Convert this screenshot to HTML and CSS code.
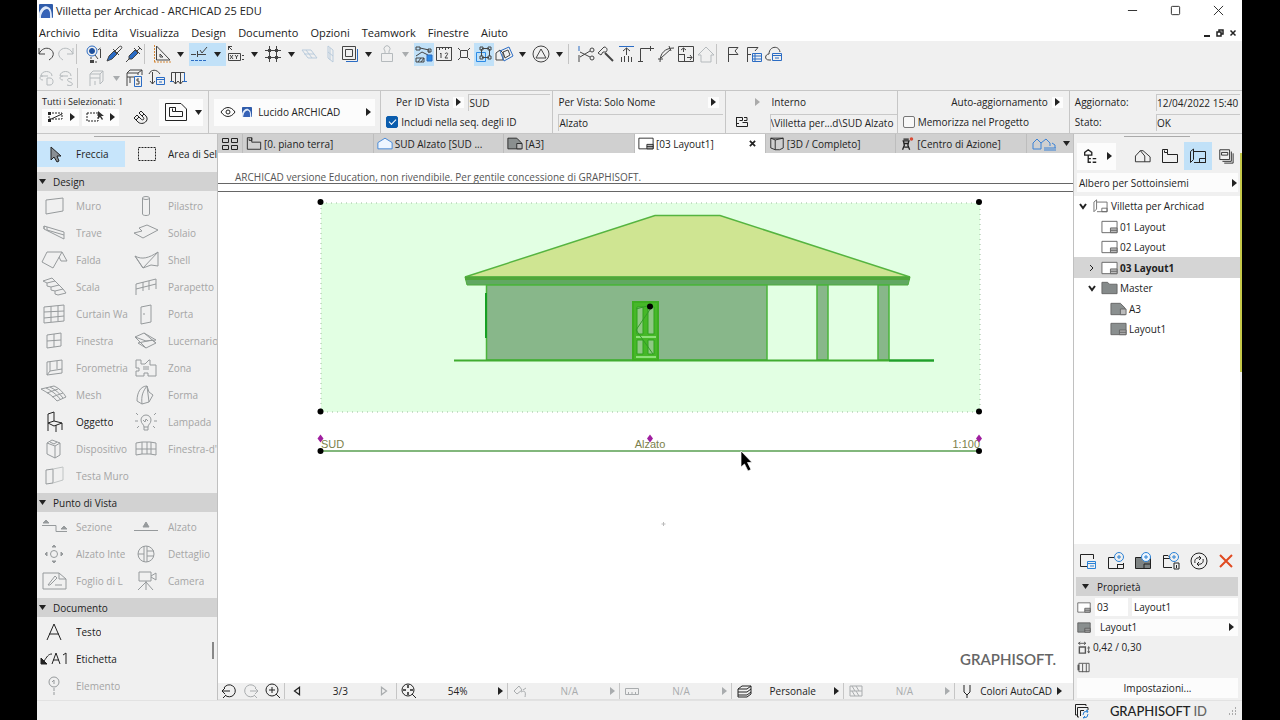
FILE: index.html
```html
<!DOCTYPE html>
<html lang="it">
<head>
<meta charset="utf-8">
<title>Villetta per Archicad - ARCHICAD 25 EDU</title>
<link rel="stylesheet" href="styles.css">
</head>
<body>
<svg class="defs" aria-hidden="true">
  <symbol id="app-logo" viewBox="0 0 14 14"><rect width="14" height="14" rx="1" fill="#2f5cab" stroke="none"/><path d="M0 14V9C2 4 6 1 9 3c3 1 4 5 4 11h-2C11 8 10 5 8 5 5 5 2 9 2 14Z" fill="#dfe9fa" stroke="none"/><path d="M2 14c1-5 3-8 6-8s3 3 3 8Z" fill="#3763b8" stroke="none"/></symbol>
  <symbol id="sheet" viewBox="0 0 18 14"><path d="M1 1h16v12H1Z" fill="#fff"/><path d="M10 8h7v5h-7Z" fill="#bbb"/><path d="M10 10.500h7"/></symbol>
  <symbol id="sheet-dark" viewBox="0 0 18 14"><path d="M1 1h16v12H1Z" fill="#8a8f8f"/><path d="M10 8h7v5h-7Z" fill="#aaa"/><path d="M10 10.500h7"/></symbol>
  <symbol id="sheet-cut" viewBox="0 0 18 14"><path d="M1 1h10l5 5v7H1Z" fill="#8a8f8f"/><path d="M11 7h6v6h-6Z" fill="#bbb"/></symbol>
  <symbol id="plan" viewBox="0 0 18 16"><path d="M1.500 1.500h5v3h-3v-2M6.500 1.500v5h10v8h-15v-13"/></symbol>
  <symbol id="book" viewBox="0 0 18 16"><path d="M5 3.500h11.500v11H5M4.500 1v10.500l-3 3v-11ZM10.500 10.500h6v4h-6Z"/></symbol>
  <symbol id="tri-right" viewBox="0 0 5 8"><path d="M0 0l5 4-5 4Z" fill="currentColor" stroke="none"/></symbol>
  <symbol id="tri-down" viewBox="0 0 7 5"><path d="M0 0h7L3.500 5Z" fill="currentColor" stroke="none"/></symbol>
</svg>

<div class="app">
  <header class="titlebar">
    <svg class="logo"><use href="#app-logo"/></svg>
    <h1>Villetta per Archicad - ARCHICAD 25 EDU</h1>
    <div class="window-controls">
      <button aria-label="Riduci"><svg viewBox="0 0 12 12"><path d="M1 6h10"/></svg></button>
      <button aria-label="Ingrandisci"><svg viewBox="0 0 12 12"><rect x="1.500" y="1.500" width="9" height="9" rx="1"/></svg></button>
      <button aria-label="Chiudi"><svg viewBox="0 0 12 12"><path d="M1 1l10 10M11 1L1 11"/></svg></button>
    </div>
  </header>

  <nav class="menubar">
    <button>Archivio</button><button>Edita</button><button>Visualizza</button><button>Design</button><button>Documento</button><button>Opzioni</button><button>Teamwork</button><button>Finestre</button><button>Aiuto</button>
    <div class="doc-controls">
      <button aria-label="Riduci documento"><svg viewBox="0 0 8 8"><path d="M1 7h6"/></svg></button>
      <button aria-label="Ripristina documento"><svg viewBox="0 0 8 8"><path d="M1 3h4v4H1ZM3 3V1h4v4H5" stroke-width="1.500"/></svg></button>
      <button aria-label="Chiudi documento"><svg viewBox="0 0 8 8"><path d="M1.500 1.500l5 5M6.500 1.500l-5 5" stroke-width="1.500"/></svg></button>
    </div>
  </nav>

  <div class="toolbars">
    <div class="toolbar">
      <button class="tb first" aria-label="Annulla"><svg viewBox="0 0 20 20"><path d="M2 4v6h6M2 10C4 5 9 3 13 5c5 3 4 8-1 11"/></svg></button>
      <button class="tb dim" aria-label="Ripeti"><svg viewBox="0 0 20 20"><path d="M17 4v6h-6M17 10C15 5 10 3 6 5c-5 3-4 8 1 11"/></svg></button>
      <span class="sep"></span>
      <button class="tb" aria-label="Trova e seleziona"><svg viewBox="0 0 20 20"><circle cx="8" cy="7" r="5" stroke="#2b6cc4"/><circle cx="8" cy="7" r="2.500" fill="#1d4f9c" stroke="#1d4f9c"/><path d="M11 11l3 4M16.500 5v9M14 6l2.500-2"/><path d="M7 13v5h7" stroke-dasharray="2 1"/><path d="M6 16h4v3H6Z" fill="currentColor" stroke="none"/></svg></button>
      <button class="tb" aria-label="Preleva parametri"><svg viewBox="0 0 20 20"><path d="M3 17l2-5 5-5 3 3-5 5Z" fill="#2b6cc4"/><path d="M9 5l6 6M11 7l4-4c2-2 4 0 2 2l-4 4"/></svg></button>
      <button class="tb" aria-label="Inietta parametri"><svg viewBox="0 0 20 20"><path d="M2 18l4-4M5 12l6-6 3 3-6 6H5Z" fill="#2b6cc4"/><path d="M10 4l6 6M13 7l3-3M14 2l4 4"/></svg></button>
      <span class="sep"></span>
      <button class="tb" aria-label="Righello"><svg viewBox="0 0 20 20"><path d="M2.500 1v17M2 18h17" stroke="#d58a3a" stroke-dasharray="2 1"/><path d="M4.500 2v14H18ZM8 10v3h3Z"/></svg></button><button class="arrow" aria-label="Opzioni righello"><svg><use href="#tri-down"/></svg></button>
      <button class="tb on" aria-label="Linee guida"><svg viewBox="0 0 20 20"><path d="M2 10.500h5M8.500 7v6M8 10.500h9"/><path d="M11 6l2 3 5-6"/><path d="M2 16.500h15" stroke="#2b6cc4" stroke-dasharray="3 1"/></svg></button><button class="arrow on" aria-label="Opzioni linee guida"><svg><use href="#tri-down"/></svg></button>
      <button class="tb" aria-label="Tracker"><svg viewBox="0 0 20 20"><path d="M2.500 6V2.500H6M2 2l4 4M2.500 9.500h12v7h-12ZM4 11l3 4M7 11l-3 4M9 11l1.500 2L12 11M10.500 13v2M16 11.500h2M16 15.500h2"/></svg></button><button class="arrow" aria-label="Opzioni tracker"><svg><use href="#tri-down"/></svg></button>
      <button class="tb" aria-label="Griglia"><svg viewBox="0 0 20 20"><path d="M6.500 2v16M13.500 2v16M2 6.500h16M2 13.500h16"/><path d="M5 6.500h3M12 6.500h3M5 13.500h3M12 13.500h3" stroke-width="3"/></svg></button><button class="arrow" aria-label="Opzioni griglia"><svg><use href="#tri-down"/></svg></button>
      <button class="tb faint" aria-label="Piano orizzontale"><svg viewBox="0 0 20 20"><path d="M2 6h9l6 8H8ZM6 6l6 8M4 10h10"/></svg></button>
      <button class="tb faint" aria-label="Piano verticale"><svg viewBox="0 0 20 20"><path d="M8 2l5 4v12l-5-4ZM8 8l5 4M10 4v12"/></svg></button>
      <button class="tb" aria-label="Gruppi"><svg viewBox="0 0 20 20"><path d="M6 17.500h11.500V5" stroke="#2b6cc4"/><path d="M2.500 2.500h13v13h-13ZM5.500 5.500h7v7h-7Z"/></svg></button><button class="arrow" aria-label="Opzioni gruppi"><svg><use href="#tri-down"/></svg></button>
      <button class="tb dim" aria-label="Gravità"><svg viewBox="0 0 20 20"><path d="M4.500 9.500h11v8h-11ZM8 9V7a3 3 0 1 1 4 0v2"/></svg></button><button class="arrow dim" aria-label="Opzioni gravità"><svg><use href="#tri-down"/></svg></button>
      <button class="tb on" aria-label="Traccia"><svg viewBox="0 0 20 20"><path d="M2 3h4v3H2ZM6 4l9 2v3M2 12l6-4 6 3M14 5h3v3h-3Z"/><path d="M13 11h5v6h-5Z" fill="#2b8ae6" stroke="#2b6cc4"/><path d="M2 14h8v4H2ZM4 18l3-4M7 18l3-4"/></svg></button>
      <button class="tb" aria-label="Misura"><svg viewBox="0 0 20 20"><path d="M2 3.500h16M2.500 3v13.500h15V3M5.500 3v3M8.500 3v2M11.500 3v3M14.500 3v2M6 10l1-1v5M11 10c1-2 4-1 2 1l-2 3h3"/></svg></button>
      <button class="tb" aria-label="Punti"><svg viewBox="0 0 20 20"><path d="M6.500 6.500h7v7h-7ZM6 6L4 4M14 6l2-2M6 14l-2 2M14 14l2 2"/></svg></button>
      <button class="tb on" aria-label="Gruppo"><svg viewBox="0 0 20 20"><path d="M2.500 8.500h9v9h-9Z" stroke="#2b8ae6"/><path d="M8 4.500h7M8 13.500h7M7.500 5v7M15.500 5v7M6 3h3v3H6ZM14 3h3v3h-3ZM14 12h3v3h-3ZM6 12h3v3H6Z"/></svg></button>
      <button class="tb" aria-label="Piano 3D"><svg viewBox="0 0 20 20"><path d="M2 16V9l4-3 3 3v7Z"/><path d="M6 7l9-4 4 9-9 5Z" stroke="#2b6cc4"/><path d="M9 8l5-2 2 5-5 3Z"/></svg></button><button class="arrow" aria-label="Opzioni piano"><svg><use href="#tri-down"/></svg></button>
      <button class="tb" aria-label="Triangolo"><svg viewBox="0 0 20 20"><circle cx="10" cy="10" r="8"/><path d="M10 5l5 9H5Z"/></svg></button><button class="arrow" aria-label="Altre opzioni"><svg><use href="#tri-down"/></svg></button>
      <span class="sep"></span>
      <button class="tb" aria-label="Taglia"><svg viewBox="0 0 20 20"><path d="M3 2v5" stroke="#2b6cc4"/><path d="M3 11v7M4 8l10 5M4 13l10-6"/><circle cx="16" cy="6" r="2"/><circle cx="16" cy="14" r="2"/></svg></button>
      <button class="tb" aria-label="Accetta"><svg viewBox="0 0 20 20"><path d="M2 9l6-6c3 0 4 3 2 5l-3 0-2 3Z"/><path d="M9 9l8 8" stroke-width="2"/></svg></button>
      <button class="tb" aria-label="Regola"><svg viewBox="0 0 20 20"><path d="M3 2.500h15" stroke="#2b6cc4"/><path d="M10.500 11V4M7 7l3.500-3L14 7M5.500 13v5M8.500 12v6M12.500 12v6M15.500 13v5"/></svg></button>
      <button class="tb" aria-label="Intersezione"><svg viewBox="0 0 20 20"><path d="M4.500 18V4.500H18M2 17.500h5M14.500 2v5"/></svg></button>
      <button class="tb" aria-label="Raccordo"><svg viewBox="0 0 20 20"><path d="M4 18C4 9 9 4 18 4M2 15h5M13 2l2 5M5 14L15 5"/></svg></button>
      <button class="tb" aria-label="Ridimensiona"><svg viewBox="0 0 20 20"><path d="M2.500 2.500h15v15h-15ZM8.500 10v7M2 10.500h7M7.500 8V4M5 6l2.500-2L10 6M11 13.500h5M14 11l2 2.500-2 2.500"/></svg></button>
      <button class="tb dim" aria-label="Casa"><svg viewBox="0 0 20 20"><path d="M2 11l8-8 8 8h-3v7H5v-7Z"/></svg></button>
      <span class="sep"></span>
      <button class="tb" aria-label="Bandiera"><svg viewBox="0 0 20 20"><path d="M4.500 18V3.500H14l-3 3.500 3 3.500H4"/></svg></button>
      <button class="tb" aria-label="Elenco questioni"><svg viewBox="0 0 20 20"><path d="M3.500 18V3.500H14L11 7M3 10.500h4"/><path d="M8.500 9.500h9v8h-9ZM8 12h9M8 15h9M11 9v9" stroke="#2b6cc4"/></svg></button>
      <button class="tb" aria-label="Nuvola"><svg viewBox="0 0 20 20"><path d="M7 16H5c-5 0-4-6 0-6 0-8 10-9 11-2"/><path d="M8.500 9.500h9v7h-9ZM8 11.500h9M11 14h4" stroke="#2b6cc4"/></svg></button>
    </div>
    <div class="toolbar second">
      <button class="tb first dim" aria-label="Carica"><svg viewBox="0 0 20 20"><path d="M4 8c0-6 11-6 11 0M3 8h8M6 12c-4 0-4-4 0-4M10 10h3c4 0 4 7 0 7h-3Z"/></svg></button>
      <button class="tb dim" aria-label="Salva"><svg viewBox="0 0 20 20"><path d="M3 8c0-6 11-6 11 0M3 8h8M6 12c-4 0-4-4 0-4M15 11c-5-2-6 2-2 3s3 5-3 3"/></svg></button>
      <span class="sep"></span>
      <button class="tb dim wide" aria-label="Mobile"><svg viewBox="0 0 20 20"><path d="M3 6l3-3h10v10l-3 3V6H3v12M3 10h10M13 6l3-3M8 13v4"/></svg></button><button class="arrow dim" aria-label="Opzioni mobile"><svg><use href="#tri-down"/></svg></button>
      <button class="tb wide" aria-label="Parametri oggetto"><svg viewBox="0 0 20 20"><path d="M1 5l3-3h12v5M1 5v13M1 5h11l4-3M1 9h7M4 9v6M12 5v2"/><path d="M8.500 8.500h7v10h-7Z" stroke="#2b6cc4"/><path d="M13 11h-2v2h2v3h-3"/></svg></button>
      <button class="tb wide" aria-label="Trasferisci"><svg viewBox="0 0 20 20"><path d="M1 6c2-5 8-5 11 0M4.500 4v12M2 13l2.500 3L7 13"/><path d="M8.500 9.500h8v7h-8ZM8 11.500h8M11 14h3" stroke="#2b6cc4"/></svg></button>
      <button class="tb wide" aria-label="Distribuisci"><svg viewBox="0 0 20 20"><path d="M1.500 13V4.500h13V13M5.500 4v12M10.500 4v12M3 13l2.500 3L8 13l2.500 3 2.500-3"/><path d="M0 13.500h3M13 13.500h4M14.500 5v8" stroke="#2b6cc4"/></svg></button>
    </div>
  </div>

  <section class="infobar" aria-label="Casella informazioni">
    <div class="info selection">
      <div class="sel-left">
        <span class="small">Tutti i Selezionati: 1</span>
        <div class="sel-buttons">
          <button class="white" aria-label="Selezione"><svg viewBox="0 0 18 12" class="i18"><path d="M3 2h13v6H3Z" stroke-dasharray="2 1"/><path d="M3 9l13-6"/><path d="M2 1h3v3H2ZM2 8h3v3H2Z" fill="currentColor" stroke="none"/></svg><svg class="tri"><use href="#tri-right"/></svg></button>
          <button class="white" aria-label="Area"><svg viewBox="0 0 18 12" class="i18"><path d="M1 2h11v8H1Z" stroke-dasharray="2 1"/><path d="M12 0v8l2-2 2 3 1-1-2-3h3Z" fill="#333" stroke="none"/></svg><svg class="tri"><use href="#tri-right"/></svg></button>
          <button class="magnet" aria-label="Magnete"><svg viewBox="0 0 16 16" class="i16"><path d="M8 2l5 5c4 5-4 10-8 6L1 9l3-3 4 4c2 2 4 0 2-2L6 4ZM3 11l3-3M9 7l2-2" fill="#eee"/></svg></button>
        </div>
      </div>
      <button class="white layout-btn" aria-label="Disegno"><svg viewBox="0 0 24 20"><path d="M1.500 1.500H17L22.500 7v11.500h-21Z"/><path d="M5.500 5.500h6v4h-3v-3M11.500 5.500v4h7v5h-13v-9"/></svg></button><button class="white layout-arrow" aria-label="Opzioni disegno"><svg class="down"><use href="#tri-down"/></svg></button>
    </div>
    <div class="info">
      <button class="white layer"><svg viewBox="0 0 16 12" class="i16"><path d="M1 6c4-6 10-6 14 0-4 6-10 6-14 0Z"/><circle cx="8" cy="6" r="2"/></svg><svg class="mini"><use href="#app-logo"/></svg><span>Lucido ARCHICAD</span><svg class="tri"><use href="#tri-right"/></svg></button>
    </div>
    <div class="info rows">
      <div class="line"><span class="label-right">Per ID Vista</span><button class="white step" aria-label="Scegli ID"><svg class="tri"><use href="#tri-right"/></svg></button><input class="well id" aria-label="ID vista" value="SUD"></div>
      <label class="line"><input type="checkbox" class="check" checked>Includi nella seq. degli ID</label>
    </div>
    <div class="info rows">
      <div class="line"><span class="grow">Per Vista: Solo Nome</span><button class="white step" aria-label="Scegli nome"><svg class="tri"><use href="#tri-right"/></svg></button></div>
      <div class="line"><input class="well" aria-label="Nome" value="Alzato"></div>
    </div>
    <div class="info source">
      <svg class="tri faded"><use href="#tri-right"/></svg><input class="plain" aria-label="Origine" value="Interno">
      <svg viewBox="0 0 14 12" class="i14"><path d="M1.500 1.500h6v3h-3M1.500 1v9.500h11v-4h-5M1 7.500h3M9 1.500h3v3H9"/></svg><input class="well" aria-label="Percorso" value="\Villetta per...d\SUD Alzato">
    </div>
    <div class="info rows">
      <div class="line"><span class="label-right">Auto-aggiornamento</span><button class="white step" aria-label="Aggiornamento"><svg class="tri"><use href="#tri-right"/></svg></button></div>
      <label class="line"><input type="checkbox" class="check">Memorizza nel Progetto</label>
    </div>
    <div class="info rows">
      <div class="line"><label class="grow" for="upd">Aggiornato:</label><input id="upd" class="well date" value="12/04/2022 15:40"></div>
      <div class="line"><label class="grow" for="st">Stato:</label><input id="st" class="well date" value="OK"></div>
    </div>
  </section>

  <main class="workspace">
    <aside class="toolbox" aria-label="Strumenti">
      <span class="handle"></span>
      <div class="tools pick">
        <button class="tool active chosen"><svg viewBox="0 0 28 22"><path d="M11 4v13l3-3 3 5 2-1-2-5h4Z" fill="#8a8f94"/></svg><span>Freccia</span></button>
        <button class="tool active"><svg viewBox="0 0 28 22"><path d="M6.500 4.500h17v13h-17Z" stroke-dasharray="2 1"/></svg><span>Area di Sel</span></button>
      </div>
      <h2><svg class="down"><use href="#tri-down"/></svg>Design</h2>
      <div class="tools">
        <button class="tool"><svg viewBox="0 0 28 22"><path d="M6 5l17-2v13L6 19Z"/></svg><span>Muro</span></button>
        <button class="tool"><svg viewBox="0 0 28 22"><ellipse cx="14" cy="3" rx="3.500" ry="1.500"/><path d="M10.500 3v16c0 2 7 2 7 0V3"/></svg><span>Pilastro</span></button>
        <button class="tool"><svg viewBox="0 0 28 22"><path d="M4 4l20 6v7L4 7ZM4 4v3M7 5v3l17 5"/></svg><span>Trave</span></button>
        <button class="tool"><svg viewBox="0 0 28 22"><path d="M2 11l8-2-3-3 8-3 11 5-15 8Z"/></svg><span>Solaio</span></button>
        <button class="tool"><svg viewBox="0 0 28 22"><path d="M7 3h15l-9 16L2 13ZM22 3l5 9h-6l-2-4"/></svg><span>Falda</span></button>
        <button class="tool"><svg viewBox="0 0 28 22"><path d="M3 7c7 4 14 2 23-4v14l-7-1-8 3ZM11 19L26 3M3 7l8 12"/></svg><span>Shell</span></button>
        <button class="tool"><svg viewBox="0 0 28 22"><path d="M3 5l9-3 3 3-8 2ZM7 7v3l4 1 8-2-4-4M11 11v3l4 1 8-2-4-4M15 15v3l3 1 8-2-3-4"/></svg><span>Scala</span></button>
        <button class="tool"><svg viewBox="0 0 28 22"><path d="M4 8l20-5v10M4 8v11M4 13l20-5M11 6v9M17 5v9"/></svg><span>Parapetto</span></button>
        <button class="tool"><svg viewBox="0 0 28 22"><path d="M4 4l20-2v16L4 20ZM4 9l20-1M4 15l20-2M11 3v16M18 3v15"/></svg><span>Curtain Wa</span></button>
        <button class="tool"><svg viewBox="0 0 28 22"><path d="M9 4l10-2v17L9 21ZM11 11h2"/></svg><span>Porta</span></button>
        <button class="tool"><svg viewBox="0 0 28 22"><path d="M7 5l14-2v13L7 18ZM7 11l14-1M14 4v13"/></svg><span>Finestra</span></button>
        <button class="tool"><svg viewBox="0 0 28 22"><path d="M3 7l9-4 12 7-10 1ZM6 13l14-3 4 3-10 5ZM3 7l11 11M12 3l12 10"/></svg><span>Lucernario</span></button>
        <button class="tool"><svg viewBox="0 0 28 22"><path d="M7 5l15-2v13L7 18ZM10 5v9l12-2M10 14l-3 4M17 4v8"/></svg><span>Forometria</span></button>
        <button class="tool"><svg viewBox="0 0 28 22"><path d="M4 3h5v4h4l4-4h1v5h6v11h-8v-3h-4v3H4v-5h3v-3H4ZM11 10h6M11 12h6"/></svg><span>Zona</span></button>
        <button class="tool"><svg viewBox="0 0 28 22"><path d="M1 5l13-3c5 2 9 6 12 11l-9 4C13 12 8 9 1 5ZM6 4c6 3 10 6 15 12M10 3c6 3 9 6 13 11M7 9l11-4M12 13l11-4"/></svg><span>Mesh</span></button>
        <button class="tool"><svg viewBox="0 0 28 22"><path d="M5 17C5 8 9 2 15 2l2 6 4 3-4 7-7 2ZM15 2c-4 5-6 10-5 18M15 2l2 16"/></svg><span>Forma</span></button>
        <button class="tool active"><svg viewBox="0 0 28 22"><path d="M8 3l6-2v9M8 3v17M8 12l6-2 8 2-8 3-6-3M16 14v7M22 12v7"/></svg><span>Oggetto</span></button>
        <button class="tool"><svg viewBox="0 0 28 22"><path d="M12 16c0-3-3-3-3-7a5 5 0 0 1 10 0c0 4-3 4-3 7v3h-4v-3h4M11 9l2 2 1-3 2 2M6 4L4 2M22 4l2-2M6 10H3M22 10h3M7 15l-2 2M21 15l2 2"/></svg><span>Lampada</span></button>
        <button class="tool"><svg viewBox="0 0 28 22"><path d="M7 5l5-3 8 3v12l-5 3-8-4ZM7 5l8 3 5-3M15 8v12M10 4l4 2 3-2"/></svg><span>Dispositivo</span></button>
        <button class="tool"><svg viewBox="0 0 28 22"><path d="M4 5l6-1h8l6 1v12l-6-1h-8l-6 1ZM10 4v12M15 4v12M19 4v12M4 11h20"/></svg><span>Finestra-d'</span></button>
        <button class="tool"><svg viewBox="0 0 28 22"><path d="M6 5l7-1v14l-7 1Z"/><path d="M13 4l10-2v13l-10 3" stroke="#c0c4c4"/></svg><span>Testa Muro</span></button>
      </div>
      <h2><svg class="down"><use href="#tri-down"/></svg>Punto di Vista</h2>
      <div class="tools">
        <button class="tool"><svg viewBox="0 0 28 22"><path d="M2 9.500h14v6h11"/><path d="M3 7l3-3 3 3ZM21 13l3-3 3 3Z" fill="currentColor"/></svg><span>Sezione</span></button>
        <button class="tool"><svg viewBox="0 0 28 22"><path d="M2 14.500h24"/><path d="M11 11l3-5 3 5Z" fill="currentColor"/></svg><span>Alzato</span></button>
        <button class="tool"><svg viewBox="0 0 28 22"><circle cx="14" cy="11" r="3.500"/><path d="M12 4l2-2 2 2ZM12 18l2 2 2-2ZM7 9l-2 2 2 2ZM21 9l2 2-2 2Z" fill="currentColor"/></svg><span>Alzato Inte</span></button>
        <button class="tool"><svg viewBox="0 0 28 22"><circle cx="14" cy="11" r="8"/><path d="M12 3v16M15 3v16M15 8h7M15 13h7M6 11h6"/></svg><span>Dettaglio</span></button>
        <button class="tool"><svg viewBox="0 0 28 22"><path d="M3 3h16l7 6v10H3ZM19 3v6h7M8 15l7-9 2 2-7 7ZM15 15h7"/></svg><span>Foglio di L</span></button>
        <button class="tool"><svg viewBox="0 0 28 22"><path d="M7 2h12v9H7ZM19 6l5-3v7l-5-3M14 11v9M14 12l-8 8M14 12l7 8"/></svg><span>Camera</span></button>
      </div>
      <h2><svg class="down"><use href="#tri-down"/></svg>Documento</h2>
      <div class="tools single">
        <button class="tool active"><svg viewBox="0 0 28 22"><path d="M7 19l7-16 7 16M9 13h10"/></svg><span>Testo</span></button>
        <button class="tool active"><svg viewBox="0 0 28 22"><path d="M12 6C8 6 7 9 4 13"/><path d="M1 10v6h6Z" fill="currentColor"/><path d="M12 16l4-11 4 11M13 12h6M23 7l3-2v11"/></svg><span>Etichetta</span></button>
        <button class="tool"><svg viewBox="0 0 28 22"><circle cx="14" cy="7" r="5"/><path d="M12 7l2-2v4"/><path d="M14 13v7" stroke-dasharray="3 1"/></svg><span>Elemento</span></button>
        <i class="scroll-thumb"></i>
      </div>
    </aside>

    <section class="editor">
      <div class="tabs">
        <button class="tab-grid" aria-label="Panoramica schede"><svg viewBox="0 0 18 16"><path d="M1.500 2.500h6v4h-6ZM10.500 2.500h6v4h-6ZM1.500 9.500h6v4h-6ZM10.500 9.500h6v4h-6Z"/></svg></button>
        <button class="tab"><svg><use href="#plan"/></svg>[0. piano terra]</button>
        <button class="tab"><svg viewBox="0 0 18 16"><path d="M1 7l8-5 8 5v7H1Z" fill="#eef6ff" stroke="#3b82d6"/></svg>SUD Alzato [SUD ...</button>
        <button class="tab"><svg><use href="#sheet-cut"/></svg>[A3]</button>
        <button class="tab current"><svg><use href="#sheet"/></svg>[03 Layout1]<svg class="tab-close" viewBox="0 0 8 8"><path d="M1 1l6 6M7 1L1 7"/></svg></button>
        <button class="tab"><svg viewBox="0 0 18 16"><path d="M2 2l5 2v11l-5-2ZM7 4l9-2v11l-4 2H7M2 2h14"/></svg>[3D / Completo]</button>
        <button class="tab"><svg viewBox="0 0 18 16"><path d="M4 5h8M5 5l1 5-2 5M11 5l-1 5 2 5M6 8h4M6 12h5M5 3h6" stroke-width="1.500"/><circle cx="14" cy="3" r="2" fill="#d94a35" stroke="none"/></svg>[Centro di Azione]</button>
        <button class="tab-menu" aria-label="Elenco schede"><svg class="houses" viewBox="0 0 26 16"><path d="M1 13V7l4-4 4 4v6ZM9 7l5-4 4 4v3M12 12h12M12 14h12M20 7l3 2v3" stroke="#3b82d6"/></svg><svg class="down"><use href="#tri-down"/></svg></button>
      </div>
      <svg class="sheet" viewBox="218 153 855 530" role="img" aria-label="Layout con alzato sud">
        <text x="235" y="181" class="edu">ARCHICAD versione Education, non rivendibile. Per gentile concessione di GRAPHISOFT.</text>
        <path class="rule" d="M218 183.500H1073M218 191.500H1073"/>
        <rect x="321" y="203" width="659" height="209" class="frame"/>
        <path d="M465 277L655 215.500H720L910 277Z" fill="#cfe592" stroke="#55b440" stroke-width="1.500"/>
        <path d="M465 277H910L908 285H467Z" fill="#61a862" stroke="#4fac3d"/>
        <path d="M465 278.500H910" stroke="#50a63a" stroke-width="3"/>
        <path d="M486.500 285H767V360H486.500ZM817 285H828V360H817ZM878 285H889V360H878Z" fill="#88b78a" stroke="#4ab53b" stroke-width="1.500"/>
        <path d="M486 293V338" stroke="#16a023" stroke-width="2"/>
        <path d="M454 360.500H934" stroke="#40ac30" stroke-width="2"/>
        <path d="M889 360.500H934" stroke="#1fa02d" stroke-width="2"/>
        <rect x="633" y="302" width="25" height="58" fill="#46b828" stroke="#3cae20" stroke-width="2"/>
        <path d="M637 307H643V334H637ZM648 307H654V334H648ZM637 340H643V354H637ZM648 340H654V354H648Z" fill="#8fc884" stroke="#2fa31d"/>
        <path d="M636 337H656M636 357H656" stroke="#8de078" stroke-width="2"/>
        <path d="M651 308L636 330L653 354M636 309L651 305" stroke="#339a29"/>
        <g class="solid"><circle cx="650" cy="306.500" r="3"/><circle cx="320.500" cy="202" r="3"/><circle cx="979" cy="202" r="3"/><circle cx="320.500" cy="411.500" r="3"/><circle cx="979" cy="411.500" r="3"/></g>
        <path d="M321 451H979" stroke="#82b77c" stroke-width="2"/>
        <g class="caption"><text x="321" y="448">SUD</text><text x="650" y="448" text-anchor="middle">Alzato</text><text x="980" y="448" text-anchor="end">1:100</text></g>
        <path class="hotspots" d="M320.500 434.500l3 4-3 4-3-4ZM650 434.500l3 4-3 4-3-4ZM979 434.500l3 4-3 4-3-4Z"/>
        <g class="solid"><circle cx="320.500" cy="451" r="3"/><circle cx="979" cy="451" r="3"/></g>
        <path d="M741 451V467L744.500 464L748 471L751 469.500L747.500 462.500H752Z" fill="#000" stroke="#fff" stroke-width=".7"/>
        <path d="M661.500 524H665.500M663.500 522V526" stroke="#bbb"/>
        <text x="1056" y="665" text-anchor="end" class="brand">GRAPHISOFT.</text>
      </svg>
      <div class="quickbar">
        <div class="zooms">
          <button aria-label="Zoom precedente"><svg viewBox="0 0 16 16"><path d="M3 5a6 6 0 1 1 1 7M1 8h8M4 5L1 8l3 3M5 12l-3 3"/></svg></button>
          <button class="dim" aria-label="Zoom successivo"><svg viewBox="0 0 16 16"><path d="M13 5a6 6 0 1 0-1 7M15 8H7M12 5l3 3-3 3M11 12l3 3"/></svg></button>
          <button aria-label="Aumenta zoom"><svg viewBox="0 0 16 16"><circle cx="7" cy="7" r="6"/><path d="M11 11l4 4M4 7h6M7 4v6"/></svg></button>
        </div>
        <div class="q"><button aria-label="Precedente"><svg class="hollow" viewBox="0 0 6 8"><path d="M5 1v6L1 4Z"/></svg></button><span>3/3</span><button class="dim" aria-label="Successivo"><svg class="hollow" viewBox="0 0 6 8"><path d="M1 1v6l4-3Z"/></svg></button></div>
        <div class="q"><svg viewBox="0 0 16 16"><circle cx="7" cy="7" r="6"/><path d="M11 11l4 4"/><path d="M7 2v3M7 9v3M2 7h3M9 7h3" stroke-width="1.500"/></svg><span>54%</span><button aria-label="Scala zoom"><svg class="tri"><use href="#tri-right"/></svg></button></div>
        <div class="q dim"><svg viewBox="0 0 16 16"><path d="M2 8l5-5 3 4-5 4ZM9 9c4-2 5 0 4 5M11 7l3-2"/></svg><span>N/A</span><button aria-label="Orientamento"><svg class="tri"><use href="#tri-right"/></svg></button></div>
        <div class="q dim"><svg viewBox="0 0 16 16"><path d="M1.500 5.500h13v6h-13ZM4.500 9v2M8 9v2M11.500 9v2"/></svg><span>N/A</span><button aria-label="Scala"><svg class="tri"><use href="#tri-right"/></svg></button></div>
        <div class="q"><svg viewBox="0 0 16 16"><path d="M2 6l4-3h9l-4 3ZM2 6v3h9l4-3M2 9v3h9l4-3M2 12v2h9l4-3M15 3v8"/></svg><span>Personale</span><button aria-label="Combinazione lucidi"><svg class="tri"><use href="#tri-right"/></svg></button></div>
        <div class="q dim"><svg viewBox="0 0 16 16"><path d="M2 3h12v10H2ZM2 8h12M4 3l3 5M8 3l3 5M4 8l3 5M8 8l3 5"/></svg><span>N/A</span><button aria-label="Struttura"><svg class="tri"><use href="#tri-right"/></svg></button></div>
        <div class="q"><svg viewBox="0 0 16 16"><path d="M5 2v7l3 3 3-3V2M8 11v4"/></svg><span>Colori AutoCAD</span><button aria-label="Penne"><svg class="tri"><use href="#tri-right"/></svg></button></div>
      </div>
    </section>

    <aside class="navigator" aria-label="Navigatore">
      <span class="handle"></span>
      <div class="nav-tabs">
        <button class="white chooser" aria-label="Progetto"><svg viewBox="0 0 18 18"><path d="M3 8V5l4-3 4 3v3ZM7 8v8h3M7 12h3M12 12h4M12 16h4" stroke-width="1.500"/></svg><svg class="tri"><use href="#tri-right"/></svg></button>
        <button aria-label="Mappa progetto"><svg viewBox="0 0 20 18"><path d="M1.500 15.500V9L7 3l5 6v6.500ZM7 3h3l8 7v5.500h-6"/></svg></button>
        <button aria-label="Mappa viste"><svg><use href="#plan"/></svg></button>
        <button class="on" aria-label="Libro layout"><svg><use href="#book"/></svg></button>
        <button aria-label="Pubblicatore"><svg viewBox="0 0 20 18"><path d="M3 2h11v11H3ZM6 15h10V4M8 17h10V6M5 5h7v3H5Z"/></svg></button>
      </div>
      <button class="white tree-select"><span>Albero per Sottoinsiemi</span><svg class="tri"><use href="#tri-right"/></svg></button>
      <ul class="tree">
        <li><svg class="chev" viewBox="0 0 8 8"><path d="M1 2l3 4 3-4"/></svg><svg class="ti"><use href="#book"/></svg>Villetta per Archicad</li>
        <li class="l1 leaf"><svg class="ti"><use href="#sheet"/></svg>01 Layout</li>
        <li class="l1 leaf"><svg class="ti"><use href="#sheet"/></svg>02 Layout</li>
        <li class="l1 selected"><svg class="chev thin" viewBox="0 0 8 8"><path d="M2 1l3 3-3 3"/></svg><svg class="ti"><use href="#sheet"/></svg>03 Layout1</li>
        <li class="l1"><svg class="chev" viewBox="0 0 8 8"><path d="M1 2l3 4 3-4"/></svg><svg class="ti" viewBox="0 0 18 14"><path d="M1 1h6l2 2h8v10H1Z" fill="#858a8a"/></svg>Master</li>
        <li class="l2 leaf"><svg class="ti"><use href="#sheet-cut"/></svg>A3</li>
        <li class="l2 leaf"><svg class="ti"><use href="#sheet-dark"/></svg>Layout1</li>
      </ul>
      <div class="nav-actions">
        <button aria-label="Impostazioni layout"><svg viewBox="0 0 18 18"><path d="M8 14.500H1.500v-12h13V7"/><path d="M8.500 9.500h8v7h-8ZM8 11.500h8M11 14h4" stroke="#2b82d6"/></svg></button>
        <button aria-label="Nuovo layout"><svg viewBox="0 0 18 18"><path d="M7 5.500H1.500v11h15V11M10 12.500h7M10.500 12v4"/><circle cx="12" cy="5" r="4.500" stroke="#2b82d6"/><path d="M10 5h4M12 3v4" stroke="#2b82d6"/></svg></button>
        <button aria-label="Nuovo master"><svg viewBox="0 0 18 18"><path d="M1.500 5.500h15v11h-15Z" fill="#7d8282"/><path d="M10 12h7M10 12v4"/><circle cx="12" cy="5" r="4.500" fill="#eef6ff" stroke="#2b82d6"/><path d="M10 5h4M12 3v4" stroke="#2b82d6"/></svg></button>
        <button aria-label="Nuovo sottoinsieme"><svg viewBox="0 0 18 18"><path d="M10 15.500H1.500v-12H6l2 2M1 6.500h7M12 11h5v6h-5ZM14.500 13v3"/><circle cx="12" cy="5" r="4.500" stroke="#2b82d6"/><path d="M10 5h4M12 3v4" stroke="#2b82d6"/></svg></button>
        <button aria-label="Aggiorna"><svg viewBox="0 0 18 18"><circle cx="9" cy="9" r="8"/><path d="M5 11c-1-4 2-6 6-5M9 4l2 2-2 2M13 7c1 4-2 6-6 5M9 14l-2-2 2-2"/></svg></button>
        <button aria-label="Elimina"><svg viewBox="0 0 18 18"><path d="M3 3l12 12M15 3L3 15" stroke="#e04a20" stroke-width="2"/></svg></button>
      </div>
      <h2><svg class="down"><use href="#tri-down"/></svg>Proprietà</h2>
      <div class="props">
        <div class="prop"><svg><use href="#sheet"/></svg><input class="code" aria-label="ID layout" value="03"><input class="grow" aria-label="Nome layout" value="Layout1"></div>
        <div class="prop"><svg><use href="#sheet-dark"/></svg><button class="white grow master"><span>Layout1</span><svg class="tri"><use href="#tri-right"/></svg></button></div>
        <div class="prop tight"><svg viewBox="0 0 14 14"><path d="M2 6.500h6.500V13H2Z" stroke-width="1.500"/><path d="M1 2.500h8M3 1L1 2.500 3 4M7 1l2 1.500L7 4M12 7v6M11 8l1-2 1 2M11 11l1 2 1-2"/></svg><span>0,42 / 0,30</span></div>
        <div class="prop"><svg viewBox="0 0 14 14"><path d="M1.500 2.500h11v9h-11ZM5.500 3v9M9.500 3v9"/><path d="M1 4v6" stroke-width="2"/></svg></div>
        <button class="white settings">Impostazioni...</button>
      </div>
    </aside>
  </main>

  <footer class="statusbar">
    <svg viewBox="0 0 16 16" class="i16"><path d="M3 12H1.500V1.500H12V3M5 14H3.500V4.500H14V7"/><path d="M6.500 13V7.500H10"/><path d="M9 12l1-3 4-1M12 7l2 1-1 2M14 11l-1 3-4 1M11 13l-2 2" stroke="#2b82d6"/></svg>
    <strong>GRAPHISOFT <span>ID</span></strong>
    <svg viewBox="0 0 10 10" class="grip"><path d="M8 2h1M5 5h1M8 5h1M2 8h1M5 8h1M8 8h1" stroke-width="2"/></svg>
  </footer>
  <i class="edge"></i>
</div>
</body>
</html>
```
FILE: styles.css
```css
* { box-sizing: border-box; }
body { margin: 0; background: #000; color: #222; font: 10px/16px "Open Sans", "Noto Sans", sans-serif; }
h1, h2, ul { margin: 0; padding: 0; font: inherit; list-style: none; }
button { padding: 0; border: 0; background: none; color: inherit; font: inherit; }
input { min-width: 0; padding: 0; border: 0; color: inherit; font: inherit; }
svg { flex: none; fill: none; stroke: currentColor; stroke-width: 1; }
.defs { position: absolute; width: 0; height: 0; }
.dim { color: #a9acae; }
.white { background: #fcfcfc; }
.on { background: #c1e1f8; }
.grow { flex: 1; }
.tri { width: 5px; height: 8px; }
.down { width: 7px; height: 5px; }
.i14 { width: 14px; height: 12px; }
.i16 { width: 16px; height: 16px; }
.i18 { width: 18px; height: 12px; }

.app { position: relative; display: flex; flex-direction: column; min-height: 100vh; margin: 0 38px 0 37px; background: #f0f0f0; }

.titlebar { display: flex; align-items: center; height: 21px; padding-left: 2px; background: #fff; font-size: 11px; }
.logo { width: 14px; height: 14px; }
.titlebar h1 { flex: 1; padding-left: 3px; }
.window-controls { display: flex; padding-right: 2px; }
.window-controls button { display: flex; justify-content: center; width: 43px; }
.window-controls svg { width: 11px; height: 11px; }

.menubar { display: flex; align-items: center; gap: 12px; height: 20px; padding: 3px 2px 0; background: #fff; font-size: 11px; }
.doc-controls { display: flex; gap: 5px; margin-left: auto; padding-right: 3px; }
.doc-controls svg { display: block; width: 8px; height: 8px; stroke-width: 2; }

.toolbars { padding-top: 1px; border-bottom: 1px solid #c6c6c6; }
.toolbar { display: flex; align-items: center; height: 24px; }
.tb { display: flex; align-items: center; justify-content: center; width: 20px; height: 23px; color: #444; }
.tb svg { width: 20px; height: 20px; }
.tb.first { width: 19px; }
.tb.wide { width: 22px; }
.tb.dim { color: #b5babd; }
.tb.faint { color: #b9cbdc; }
.arrow { display: flex; align-items: center; justify-content: center; width: 17px; height: 23px; }
.arrow svg { width: 7px; height: 5px; }
.sep { width: 8px; height: 20px; border-left: 1px solid #c4c4c4; }
.second .sep { width: 9px; }
.second .tb.first { margin-right: 1px; }

.infobar { display: grid; grid-template-columns: repeat(7, minmax(0, 1fr)); height: 43px; border-bottom: 1px solid #c6c6c6; }
.info { display: flex; align-items: center; min-width: 0; padding: 0 5px; border-right: 1px solid #c6c6c6; white-space: nowrap; }
.info:last-child { border-right: 0; }
.small { font-size: 9px; line-height: 14px; }
.sel-left { flex: 1; padding-bottom: 6px; }
.sel-buttons { display: flex; gap: 3px; }
.sel-buttons button { display: flex; align-items: center; justify-content: center; gap: 6px; width: 37px; height: 17px; }
.layout-btn, .layout-arrow { display: flex; align-items: center; justify-content: center; width: 34px; height: 27px; }
.layout-arrow { width: 10px; }
.layout-btn svg { width: 24px; height: 20px; }
.layer { display: flex; align-items: center; gap: 6px; width: 100%; height: 27px; padding: 0 4px 0 6px; }
.layer span { flex: 1; text-align: left; }
.mini { width: 10px; height: 10px; }
.rows { flex-direction: column; align-items: stretch; justify-content: center; gap: 2px; padding: 0 2px 0 5px; }
.line { display: flex; align-items: center; height: 18px; }
.label-right { flex: 1; text-align: right; }
.step { display: flex; align-items: center; justify-content: center; width: 11px; height: 11px; margin: 0 4px; }
.well { width: 100%; height: 17px; border: solid #c9c9c9; border-width: 1px 0 0 1px; background: transparent; }
.well.id { width: 82px; }
.well.date { width: 84px; }
.plain { width: 100%; padding-left: 2px; background: transparent; }
.check { appearance: none; width: 12px; height: 12px; margin: 0 3px 0 0; border: 1px solid #777; border-radius: 2px; background: #f8f8f8; }
.check:checked { border-color: #0a5cad; background: #0a5cad; }
.check:checked::after { content: ""; display: block; width: 6px; height: 3px; margin: 2px auto 0; border: solid #fff; border-width: 0 0 1px 1px; transform: rotate(-45deg); }
.source { display: grid; grid-template-columns: 35px minmax(0, 1fr); grid-template-rows: 18px 18px; align-content: center; row-gap: 2px; padding: 0 0 0 9px; }
.source .faded { justify-self: end; margin-right: 10px; color: #aaa; }

.workspace { flex: 1; display: grid; grid-template-columns: 181px minmax(0, 1fr) 169px; }

.handle { display: block; width: 66px; height: 1px; margin: 2px auto 4px; background: #aaa; }
.toolbox { min-width: 0; border-right: 1px solid #c0c0c0; overflow: hidden; }
.toolbox h2, .navigator h2 { display: flex; align-items: center; gap: 7px; height: 19px; padding-left: 2px; background: #d2d2d2; }
.tools { position: relative; display: grid; grid-template-columns: 92px minmax(0, 1fr); grid-auto-rows: 27px; padding: 1px 0 4px; }
.tools.single { grid-template-columns: 1fr; padding-bottom: 0; }
.tools.pick { grid-auto-rows: 26px; padding: 0 0 5px; }
.tool { display: flex; align-items: center; gap: 5px; min-width: 0; color: #a5a5a5; text-align: left; }
.tool svg { width: 28px; height: 22px; margin: 0 3px; color: #969a9c; }
.tool span { overflow: hidden; white-space: nowrap; }
.tool.active, .tool.active svg { color: #222; }
.tool.chosen { margin-right: 4px; background: #c7e5fb; }
.scroll-thumb { position: absolute; top: 25px; right: 3px; width: 2px; height: 17px; background: #888; }

.editor { display: flex; flex-direction: column; min-width: 0; background: #fff; }
.tabs { display: grid; grid-template-columns: 24px repeat(6, minmax(0, 1fr)) 47px; height: 19px; background: #d0d0d0; }
.tab { display: flex; align-items: center; gap: 2px; padding-left: 3px; border-left: 1px solid #bdbdbd; white-space: nowrap; }
.tab svg { width: 16px; height: 15px; }
.tab-grid svg { display: block; width: 18px; height: 16px; margin: 0 auto; }
.tab.current { background: #fff; }
.tab .tab-close { width: 7px; height: 7px; margin: 0 9px 0 auto; stroke-width: 2; }
.tab-menu { display: flex; align-items: center; justify-content: flex-end; gap: 5px; padding-right: 3px; border-left: 1px solid #bdbdbd; }
.houses { width: 26px; height: 16px; }
.sheet { display: block; width: 100%; }
.edu { font-size: 10px; fill: #555; }
.rule { stroke: #666; }
.frame { fill: #e2ffe3; stroke: #9dbb9d; stroke-dasharray: 1 4; }
.caption { fill: #7b7f4b; font: 11px "Liberation Sans", sans-serif; }
.brand { fill: #666; font: 600 15px Lato, sans-serif; }
.solid { fill: #000; }
.hotspots { fill: #a01fa0; }
.caption, .brand, .edu, .solid, .hotspots { stroke: none; }

.quickbar { display: grid; grid-template-columns: 66px repeat(7, minmax(0, 1fr)); height: 17px; margin-top: auto; padding-right: 7px; border-bottom: 1px solid #e0e0e0; background: #f0f0f0; }
.zooms { display: flex; justify-content: space-around; }
.zooms svg, .q > svg { display: block; width: 16px; height: 16px; }
.q { display: flex; align-items: center; padding: 0 4px; border-left: 1px solid #c6c6c6; white-space: nowrap; }
.q span { flex: 1; text-align: center; }
.q .tri, .hollow { display: block; width: 5px; height: 8px; }
.q .hollow { width: 8px; height: 10px; margin: 0 4px; }

.navigator { display: flex; flex-direction: column; padding-right: 2px; border-left: 1px solid #c0c0c0; }
.nav-tabs { display: flex; align-items: center; height: 30px; padding-left: 3px; }
.nav-tabs button { display: flex; align-items: center; justify-content: center; width: 28px; height: 28px; }
.nav-tabs .chooser { gap: 8px; width: 39px; height: 27px; margin-right: 13px; }
.nav-tabs svg:not(.tri) { width: 18px; height: 16px; }
.tree-select { display: flex; align-items: center; justify-content: space-between; height: 19px; margin: 2px 2px 4px 3px; padding: 0 1px 0 2px; }
.tree { flex: 1; background: #fff; }
.tree li { display: flex; align-items: center; gap: 2px; height: 20px; padding-left: 5px; }
.tree li:nth-child(even) { height: 21px; }
.tree .chev { width: 8px; height: 8px; margin-right: 3px; stroke-width: 2; }
.tree .thin { stroke-width: 1; }
.tree .ti { width: 17px; height: 14px; color: #666; }
.tree li.l1 { padding-left: 14px; }
.tree li.l1.leaf { padding-left: 27px; }
.tree li.l2.leaf { padding-left: 36px; }
.tree li.selected { background: #d5d5d5; font-weight: 700; }
.nav-actions { display: flex; height: 33px; }
.nav-actions button { display: flex; align-items: center; justify-content: center; width: 28px; }
.nav-actions svg { width: 18px; height: 18px; }
.navigator h2 { gap: 8px; margin: 0 2px; padding-left: 6px; }
.props { display: flex; flex-direction: column; gap: 2px; padding: 2px 2px 2px 3px; }
.prop { display: flex; align-items: center; gap: 4px; height: 18px; }
.prop.tight { gap: 2px; }
.prop > svg { width: 14px; height: 13px; color: #555; }
.prop input { height: 18px; padding-left: 2px; background: #fff; }
.prop .code { width: 33px; }
.master { display: flex; align-items: center; justify-content: space-between; height: 17px; padding: 0 4px 0 5px; }
.settings { height: 20px; }

.statusbar { display: flex; align-items: center; height: 20px; padding-right: 5px; border-top: 1px solid #e2e2e2; }
.statusbar .i16 { margin-left: auto; }
.statusbar strong { padding: 0 20px; font: 500 13px/18px Lato, sans-serif; }
.statusbar span { color: #666; }
.grip { width: 10px; height: 10px; color: #aaa; }
.edge { position: absolute; top: 153px; right: 0; width: 2px; height: 219px; background: #c5c84a; }
```
